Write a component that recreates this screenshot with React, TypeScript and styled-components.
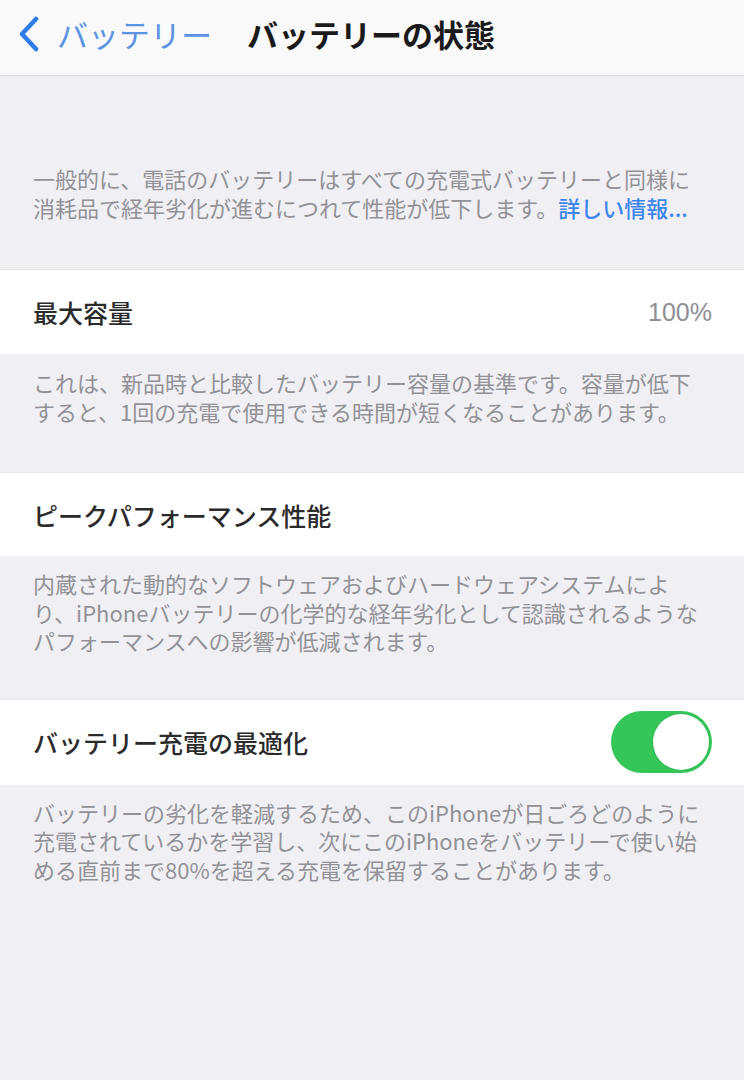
import styled, { createGlobalStyle } from 'styled-components';

const GlobalStyle = createGlobalStyle`
  html, body {
    margin: 0;
    padding: 0;
    background: #f0eff4;
    font-family: "Noto Sans CJK JP", "Noto Sans", sans-serif;
  }
`;

const Page = styled.div`
  width: 744px;
  min-height: 1080px;
  background: #f0eff4;
  display: flex;
  flex-direction: column;
`;

const NavBar = styled.div`
  height: 76px;
  background: #f9f9f9;
  border-bottom: 1px solid #dedee2;
  display: flex;
  align-items: center;
  padding-left: 16px;
  padding-bottom: 8px;
  box-sizing: border-box;
`;

const BackButton = styled.div`
  display: flex;
  align-items: center;
  color: #5a93e2;
  font-size: 31px;
  gap: 15px;
  margin-right: 35px;
`;

const Title = styled.div`
  font-size: 31px;
  font-weight: 700;
  color: #1a1a1a;
`;

const Footer = styled.div<{ $top: number; $bottom: number }>`
  padding: ${(p) => p.$top}px 12px ${(p) => p.$bottom}px 33px;
  font-size: 22px;
  line-height: 28.5px;
  color: #929296;
  white-space: nowrap;
`;

const MoreLink = styled.span`
  color: #3f86ec;
  font-weight: 500;
`;

const Row = styled.div<{ $height: number }>`
  height: ${(p) => p.$height}px;
  background: #ffffff;
  border-top: 1px solid #e4e4ea;
  box-sizing: border-box;
  display: flex;
  align-items: center;
  justify-content: space-between;
  padding: 0 32px 0 33px;
`;

const Label = styled.div`
  font-size: 25px;
  font-weight: 500;
  color: #2a2a2a;
`;

const Value = styled.div`
  font-size: 25px;
  color: #8e8e93;
  font-family: "Liberation Sans", Arial, sans-serif;
`;

const Toggle = styled.div<{ $on: boolean }>`
  width: 101px;
  height: 62px;
  border-radius: 31px;
  background: ${(p) => (p.$on ? '#35c659' : '#e5e5ea')};
  display: flex;
  align-items: center;
  justify-content: ${(p) => (p.$on ? 'flex-end' : 'flex-start')};
  padding: 3px;
  box-sizing: border-box;
`;

const Knob = styled.div`
  width: 56px;
  height: 56px;
  border-radius: 50%;
  background: #ffffff;
  box-shadow: 0 0 0 1px rgba(40, 170, 70, 0.4);
`;

function Chevron() {
  return (
    <svg width="26" height="36" viewBox="0 0 26 36">
      <path d="M20 3 L6 18 L20 33" fill="none" stroke="#2f7de8" strokeWidth="4.5" strokeLinecap="round" strokeLinejoin="round" />
    </svg>
  );
}

export default function App() {
  return (
    <Page>
      <GlobalStyle />
      <NavBar>
        <BackButton>
          <Chevron />
          バッテリー
        </BackButton>
        <Title>バッテリーの状態</Title>
      </NavBar>

      <Footer $top={88} $bottom={48}>
        一般的に、電話のバッテリーはすべての充電式バッテリーと同様に
        <br />
        消耗品で経年劣化が進むにつれて性能が低下します。<MoreLink>詳しい情報...</MoreLink>
      </Footer>

      <Row $height={85}>
        <Label>最大容量</Label>
        <Value>100%</Value>
      </Row>

      <Footer $top={14} $bottom={47}>
        これは、新品時と比較したバッテリー容量の基準です。容量が低下
        <br />
        すると、1回の充電で使用できる時間が短くなることがあります。
      </Footer>

      <Row $height={84}>
        <Label>ピークパフォーマンス性能</Label>
      </Row>

      <Footer $top={13} $bottom={44}>
        内蔵された動的なソフトウェアおよびハードウェアシステムによ
        <br />
        り、iPhoneバッテリーの化学的な経年劣化として認識されるような
        <br />
        パフォーマンスへの影響が低減されます。
      </Footer>

      <Row $height={86}>
        <Label>バッテリー充電の最適化</Label>
        <Toggle $on>
          <Knob />
        </Toggle>
      </Row>

      <Footer $top={13} $bottom={40}>
        バッテリーの劣化を軽減するため、このiPhoneが日ごろどのように
        <br />
        充電されているかを学習し、次にこのiPhoneをバッテリーで使い始
        <br />
        める直前まで80%を超える充電を保留することがあります。
      </Footer>
    </Page>
  );
}
